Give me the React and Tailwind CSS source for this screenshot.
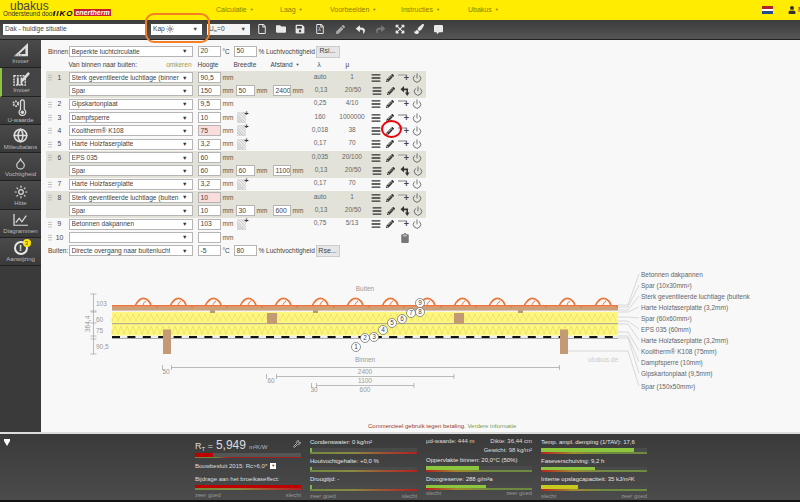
import React from 'react';
import { Globe, Droplet, Sun, Power, Wrench } from 'lucide-react';
import {
  FaRegFile, FaFolder, FaSave, FaPen, FaReply, FaShare, FaExpandArrowsAlt, FaPaintBrush, FaCommentAlt,
  FaBars, FaPencilAlt, FaClipboard, FaUser,
} from 'react-icons/fa';

const navItems = [
  ['Calculatie', 'w-[64px]', 'ml-[216px]'],
  ['Laag', 'w-[50px]', ''],
  ['Voorbeelden', 'w-[71px]', ''],
  ['Instructies', 'w-[67px]', ''],
  ['Ubakus', 'w-[50px]', ''],
];

const layers = [
  { n: 1, name: 'Sterk geventileerde luchtlage (binner', h: '90,5', l: 'auto', m: '1', shade: true },
  { name: 'Spar', h: '150', b: '50', a: '2400', l: '0,13', m: '20/50', shade: true, sub: true },
  { n: 2, name: 'Gipskartonplaat', h: '9,5', l: '0,25', m: '4/10' },
  { n: 3, name: 'Dampfsperre', h: '10', l: '160', m: '1000000', hatch: true },
  { n: 4, name: 'Kooltherm® K108', h: '75', l: '0,018', m: '38', hatch: true, warn: true },
  { n: 5, name: 'Harte Holzfaserplatte', h: '3,2', l: '0,17', m: '70', hatch: true },
  { n: 6, name: 'EPS 035', h: '60', l: '0,035', m: '20/100', shade: true },
  { name: 'Spar', h: '60', b: '60', a: '1100', l: '0,13', m: '20/50', shade: true, sub: true },
  { n: 7, name: 'Harte Holzfaserplatte', h: '3,2', l: '0,17', m: '70', hatch: true },
  { n: 8, name: 'Sterk geventileerde luchtlage (buiten', h: '10', l: 'auto', m: '1', shade: true, warn: true },
  { name: 'Spar', h: '10', b: '30', a: '600', l: '0,13', m: '20/50', shade: true, sub: true },
  { n: 9, name: 'Betonnen dakpannen', h: '103', l: '0,75', m: '5/13', hatch: true },
  { n: 10, name: '', h: '', empty: true },
];

const sideItems = [
  ['Invoer', <SetSquare key="a" />],
  ['Invoer', <InputIcon key="b" />, true],
  ['U-waarde', <ThermoIcon key="c" />],
  ['Milieubalans', <Globe key="d" size={15} strokeWidth={2.6} />],
  ['Vochtigheid', <Droplet key="e" size={13} strokeWidth={2} />],
  ['Hitte', <Sun key="f" size={14} strokeWidth={2} />],
  ['Diagrammen', <ChartIcon key="g" />],
  ['Aanwijzing', <WarnIcon key="h" />],
];

const labels = [
  ['Betonnen dakpannen', 273, 304],
  ['Spar (10x30mm²)', 284, 306],
  ['Sterk geventileerde luchtlage (buitenk', 295, 309],
  ['Harte Holzfaserplatte (3,2mm)', 306, 311],
  ['Spar (60x60mm²)', 317, 316],
  ['EPS 035 (60mm)', 328, 320],
  ['Harte Holzfaserplatte (3,2mm)', 339, 323],
  ['Kooltherm® K108 (75mm)', 350, 331],
  ['Dampfsperre (10mm)', 361, 335],
  ['Gipskartonplaat (9,5mm)', 372, 337],
  ['Spar (150x50mm²)', 385, 350],
];

const callouts = [
  [1, 356, 346], [2, 365, 337], [3, 374, 336], [4, 383, 329], [5, 392, 322],
  [6, 402, 318], [7, 411, 312], [8, 420, 311], [9, 420, 302],
];

const tiles = [143, 178, 213, 248, 283, 320, 355, 390, 427, 462, 497, 532, 567, 603];

function SetSquare() {
  return (
    <svg width="16" height="14" viewBox="0 0 18 16" fill="#ddd">
      <path d="M17 0 V15 H1 Z M14 6 L7 12.5 H14 Z" fillRule="evenodd" />
      <path d="M1 15 L5 11 M3 15 V13 M6 15 V13 M9 15 V13" stroke="#888" />
    </svg>
  );
}

function InputIcon() {
  return (
    <svg width="18" height="15" viewBox="0 0 19 16" fill="#ddd">
      <path d="M1 5 H13 V15 H1 Z" fill="none" stroke="#ddd" strokeDasharray="2 1" strokeWidth="1.6" />
      <path d="M4 7 H6 V15 H4 Z M8 7 H10 V15 H8 Z" />
      <path d="M9 9 L16 1 L18 3 L11 11 L8 12 Z" />
    </svg>
  );
}

function ThermoIcon() {
  return (
    <svg width="19" height="17" viewBox="0 0 20 18" fill="none" stroke="#ddd">
      <circle cx="5" cy="5" r="2.5" strokeWidth="2" strokeDasharray="1.5 1" />
      <path d="M10 11 V3 a2 2 0 0 1 4 0 V11 a3.5 3.5 0 1 1 -4 0 Z" strokeWidth="1.3" />
      <circle cx="12" cy="14" r="1.8" fill="#ddd" stroke="none" />
    </svg>
  );
}

function ChartIcon() {
  return (
    <svg width="16" height="14" viewBox="0 0 18 16" fill="none" stroke="#ddd" strokeWidth="1.4">
      <path d="M1 1 V14 H17" />
      <path d="M3 11 L7 6 L10 10 L15 3" />
    </svg>
  );
}

function WarnIcon() {
  return (
    <div className="relative flex h-[14px] w-[14px] items-center justify-center rounded-full border-2 border-[#e8e8e8] text-[9px] font-bold text-[#e8e8e8]">
      !
      <span className="absolute -right-[5px] -top-[4px] flex h-[8px] w-[8px] items-center justify-center rounded-full bg-[#ffe600] text-[6px] font-normal text-[#555]">3</span>
    </div>
  );
}

function HatchIcon() {
  return (
    <div className="relative h-[11px] w-[9px] bg-[repeating-linear-gradient(45deg,#cfcfcf_0,#cfcfcf_1px,#e8e8e8_1px,#e8e8e8_2px)]">
      <span className="absolute -right-[3px] -top-[2px] text-[7px] font-bold leading-none text-[#333]">+</span>
    </div>
  );
}

function AddLayerIcon() {
  return (
    <div className="relative h-[10px] w-[11px]">
      <div className="absolute left-0 top-[1px] h-[2px] w-[9px] bg-[#bbb]" />
      <span className="absolute bottom-0 right-0 text-[9px] font-bold leading-[9px] text-[#444]">+</span>
    </div>
  );
}

function TurnIcon() {
  return (
    <svg width="10" height="10" viewBox="0 0 10 10" fill="#333">
      <path d="M4 0 V2.6 H8 V7 H6.4 V4.2 H4 V6.6 L0.5 3.3 Z" />
      <path d="M4.9 6.6 H9.5 L7.2 10 Z" />
    </svg>
  );
}

function Field({ value, width = 'w-[23px]', warn }) {
  return (
    <div className={`flex h-[11px] shrink-0 items-center overflow-hidden border border-[#b5b5b5] pl-[2px] text-[6.8px] text-[#444] ${width} ${warn ? 'bg-[#fbdcdc]' : 'bg-white'}`}>
      {value}
    </div>
  );
}

function Select({ value }) {
  return (
    <div className="flex h-[11px] w-[124px] shrink-0 items-center justify-between overflow-hidden border border-[#b5b5b5] bg-white pl-[2px] pr-[4px] text-[6.6px] text-[#444]">
      <span className="overflow-hidden whitespace-nowrap">{value}</span>
      <span className="ml-[1px] shrink-0 text-[5.5px] text-[#333]">▼</span>
    </div>
  );
}

function Grip() {
  return <div className="h-[7px] w-[4px] bg-[radial-gradient(#b5b5b5_0.7px,transparent_0.8px)] bg-[length:2px_2.4px]" />;
}

function LayerRow({ row }) {
  return (
    <div className={`ml-[5px] flex h-[13.33px] w-[380px] items-center ${row.shade ? 'bg-[#e2e2d9]' : ''}`}>
      <div className="flex w-[22.5px] shrink-0 items-center pl-[2px] text-[6.8px] text-[#444]">
        {row.n && <Grip />}
        {row.n && <span className="w-[15px] text-center">{row.n}</span>}
      </div>
      <Select value={row.name} />
      <div className="ml-[5px]"><Field value={row.h} warn={row.warn} /></div>
      <span className="ml-[2px] w-[13px] shrink-0 text-[6.5px] text-[#555]">mm</span>
      {row.b && (
        <>
          <Field value={row.b} width="w-[19px]" />
          <span className="ml-[2px] w-[16px] shrink-0 text-[6.5px] text-[#555]">mm</span>
          <Field value={row.a} width="w-[18px]" />
          <span className="ml-[2px] w-[13px] shrink-0 text-[6.5px] text-[#555]">mm</span>
        </>
      )}
      {!row.b && <div className="w-[69px] shrink-0 pl-[1px]">{row.hatch && <HatchIcon />}</div>}
      <div className="flex shrink-0 items-center text-[6.5px] text-[#666]">
        <span className="-mt-[2px] w-[31px] shrink-0 text-center">{row.l}</span>
        <span className="-mt-[2px] w-[33px] shrink-0 text-center">{row.m}</span>
      </div>
      {row.empty ? (
        <div className="ml-[31px] text-[#777]"><FaClipboard size={10} /></div>
      ) : (
        <div className="flex items-center text-[#333]">
          <span className="flex w-[14px] justify-center"><FaBars size={10} /></span>
          <span className="flex w-[14px] justify-center"><FaPencilAlt size={8} /></span>
          <span className="flex w-[14px] justify-center">{row.sub ? <TurnIcon /> : <AddLayerIcon />}</span>
          <span className="flex w-[13px] justify-center"><Power size={10} strokeWidth={1.6} /></span>
        </div>
      )}
    </div>
  );
}

function ClimateRow({ label, select, temp, rh, button }) {
  return (
    <div className="ml-[7px] flex h-[13px] items-center text-[6.5px] text-[#444]">
      <span className="w-[20.5px] shrink-0">{label}</span>
      <Select value={select} />
      <div className="ml-[5px]"><Field value={temp} /></div>
      <span className="ml-[2px] w-[11px] shrink-0">°C</span>
      <Field value={rh} />
      <span className="ml-[2px] w-[57px] shrink-0 whitespace-nowrap">% Luchtvochtigheid</span>
      <div className="flex h-[12px] w-[24px] items-center justify-center border border-[#ccc] bg-[#e6e6e6] text-[7px]">{button}</div>
    </div>
  );
}

function Diagram() {
  return (
    <svg className="mt-[6px] block" width="759" height="155" viewBox="41 262 759 155" fontFamily="Liberation Sans, sans-serif">
      {/* leader lines */}
      {labels.map(([, y, from], i) => (
        <path key={i} d={`M${i === 10 ? 568 : 618} ${from} H628 L639 ${y}`} fill="none" stroke="#cfcfcf" strokeWidth="0.8" />
      ))}
      {/* insulation */}
      <rect x="112" y="311" width="506" height="11" fill="#fdf77f" />
      <rect x="112" y="323" width="506" height="11.5" fill="#fdf77f" />
      <path d={`M112 317 ${Array.from({ length: 169 }, (_, i) => `L${112 + i * 3} ${i % 2 ? 313 : 320}`).join(' ')}`} fill="none" stroke="#e0cf60" strokeWidth="0.5" />
      <path d={`M112 329 ${Array.from({ length: 169 }, (_, i) => `L${112 + i * 3} ${i % 2 ? 325 : 333}`).join(' ')}`} fill="none" stroke="#e0cf60" strokeWidth="0.5" />
      <rect x="112" y="322" width="506" height="1.2" fill="#b8ad8f" />
      <rect x="112" y="335" width="506" height="2" fill="#eee" />
      <rect x="112" y="337" width="506" height="1" fill="#aaa" />
      <path d="M112 336 H618" stroke="#111" strokeWidth="2" strokeDasharray="8 7.4" />
      {/* spars */}
      {[267, 454].map((x) => <rect key={x} x={x} y="312" width="10" height="11" fill="#c49a74" />)}
      {[163, 560].map((x) => <rect key={x} x={x} y="328.5" width="8" height="24.5" fill="#c49a74" />)}
      <rect x="112" y="309.5" width="506" height="1.5" fill="#f6f6ee" />
      {[210, 313, 416, 518].map((x) => <rect key={x} x={x} y="309" width="5" height="3" fill="#b89a78" />)}
      {/* tiles */}
      <rect x="112" y="306" width="506" height="3.6" fill="#c9a27c" />
      <rect x="112" y="304" width="506" height="1.8" fill="#e9763c" />
      {tiles.map((x) => (
        <g key={x} fill="none" stroke="#e9763c">
          <path d={`M${x - 8} 305 C${x - 5} 299 ${x - 1} 296 ${x + 3} 298 C${x + 5} 299 ${x + 7} 301 ${x + 8} 304`} strokeWidth="1.6" />
          <path d={`M${x} 305 C${x} 303 ${x + 1} 301 ${x + 3} 300`} strokeWidth="1" />
          <path d={`M${x + 14} 304 V307`} strokeWidth="1.2" />
        </g>
      ))}
      {/* dimensions */}
      <g stroke="#aaa" strokeWidth="0.8" fill="none">
        <path d="M93.5 293 V353 M90.5 293 H96.5 M90.5 310 H96.5 M90.5 311 H96.5 M90.5 322 H96.5 M90.5 335 H96.5 M90.5 338 H96.5 M90.5 353 H96.5" />
        <path d="M162.5 364 V369 M171.5 364 V369 M171.5 366.5 H559.5 M559.5 364 V369" />
        <path d="M266.5 373 V378 M276.5 373 V378 M276.5 375.5 H454 M454 373 V378" />
        <path d="M311.5 382 V387 M316.5 382 V387 M316.5 384.5 H414 M414 382 V387" />
      </g>
      <g fontSize="6.5" fill="#999">
        <text x="96" y="304.5">103</text>
        <text x="96" y="320.5">60</text>
        <text x="96" y="331.5">75</text>
        <text x="96" y="348">90,5</text>
        <text x="89.5" y="331" transform="rotate(-90 89.5 331)">364,4</text>
        <text x="166" y="372.5" textAnchor="middle">50</text>
        <text x="365" y="372.5" textAnchor="middle">2400</text>
        <text x="271" y="381.5" textAnchor="middle">60</text>
        <text x="365" y="381.5" textAnchor="middle">1100</text>
        <text x="314" y="390.5" textAnchor="middle">30</text>
        <text x="365" y="390.5" textAnchor="middle">600</text>
        <text x="365" y="290" textAnchor="middle">Buiten</text>
        <text x="365" y="360.5" textAnchor="middle">Binnen</text>
      </g>
      <text x="618" y="360.5" fontSize="6.5" fill="#ccc" textAnchor="end">ubakus.de</text>
      {callouts.map(([n, x, y]) => (
        <g key={n}>
          <circle cx={x} cy={y} r="4.5" fill="#fff" stroke="#666" strokeWidth="0.7" />
          <text x={x} y={y + 2.4} fontSize="6.5" fill="#444" textAnchor="middle">{n}</text>
        </g>
      ))}
      {labels.map(([text, y]) => (
        <text key={y} x="641" y={y + 2.5} fontSize="6.5" fill="#666">{text}</text>
      ))}
    </svg>
  );
}

function Scale({ invert }) {
  return (
    <div className={`h-[2px] w-full ${invert ? 'bg-[linear-gradient(90deg,#b52020_0%,#a08a30_30%,#6f8a40_60%,#6f8a40_100%)]' : 'bg-[linear-gradient(90deg,#6f8a40_0%,#8a8a40_40%,#a05030_70%,#b52020_100%)]'}`} />
  );
}

function Metric({ label, fillClass, width, invert }) {
  return (
    <div className="h-[18.5px]">
      <div className="h-[11px] whitespace-nowrap text-[6px] leading-[11px] text-[#e4e4e4]">{label}</div>
      <div className="h-[3.5px] w-full bg-[#4a4a4a]">
        <div className={`h-full ${fillClass}`} style={{ width }} />
      </div>
      <Scale invert={invert} />
    </div>
  );
}

function Ends({ left, right }) {
  return (
    <div className="flex justify-between text-[5.8px] leading-[9px] text-[#999]">
      <span>{left}</span>
      <span>{right}</span>
    </div>
  );
}

export default function App() {
  return (
    <div className="relative flex h-[502px] w-[800px] flex-col overflow-hidden bg-[#f8f8f8] font-['Liberation_Sans',sans-serif]">
      {/* header */}
      <header className="flex h-[20px] shrink-0 items-center bg-[#ffec00] text-[7px] text-[#8a8000]">
        <div className="relative h-[20px] w-0 shrink-0">
          <span className="absolute left-[10px] top-0 whitespace-nowrap text-[12px] leading-[12px] text-[#444]">ubakus</span>
          <span className="absolute left-[3px] top-[9.5px] whitespace-nowrap text-[6.4px] leading-[7px] text-[#333]">Ondersteund door</span>
          <span className="absolute left-[53px] top-[9.5px] whitespace-nowrap text-[8px] font-bold italic leading-[7px] tracking-[1px] text-black">IIKO</span>
          <span className="absolute left-[74px] top-[9px] h-[7px] w-[37px] whitespace-nowrap bg-[#c8202a] text-center text-[7px] font-bold italic leading-[7px] text-white">enertherm</span>
        </div>
        {navItems.map(([name, w, ml]) => (
          <div key={name} className={`${ml} flex ${w} items-center gap-[3px]`}>
            {name}<span className="text-[4px]">▼</span>
          </div>
        ))}
        <div className="ml-auto mr-[15px] flex h-[8px] w-[11px] flex-col">
          <div className="h-1/3 bg-[#b4202a]" />
          <div className="h-1/3 bg-white" />
          <div className="h-1/3 bg-[#2a4a8c]" />
        </div>
        <div className="mr-[-3px] flex w-[15px] items-center gap-[2px] overflow-hidden text-[#333]">
          <FaUser size={8} className="shrink-0" /><span className="text-[7px]">M</span>
        </div>
      </header>

      {/* toolbar */}
      <div className="flex h-[20px] shrink-0 items-center border-b border-[#222] bg-[linear-gradient(#3c3c3c,#555)] pb-[1px] text-[#e8e8e8]">
        <div className="ml-[3px] flex h-[11px] w-[143px] items-center bg-white pl-[2px] text-[6.6px] text-[#444]">Dak - huidige situatie</div>
        <div className="ml-[5px] flex h-[11px] w-[51px] items-center justify-between bg-white px-[2px] pr-[4px] text-[6.6px] text-[#444]">
          <span className="flex items-center gap-[1px]">Kap <Sun size={8} /></span>
          <span className="text-[5.5px]">▼</span>
        </div>
        <div className="ml-[5px] flex h-[11px] w-[43px] items-center justify-between bg-[#f4f4f4] px-[2px] pr-[4px] text-[6.6px] text-[#444]">
          <span>U<sub className="text-[4px]">m</sub>=0</span>
          <span className="text-[5.5px]">▼</span>
        </div>
        <div className="ml-[2.5px] flex items-center">
          <span className="flex w-[19px] justify-center"><FaRegFile size={10} /></span>
          <span className="flex w-[19px] justify-center"><FaFolder size={10} /></span>
          <span className="flex w-[19px] justify-center"><FaSave size={10} /></span>
          <span className="relative flex w-[20px] justify-center">
            <FaRegFile size={10} />
            <span className="absolute left-0 right-0 top-[2px] text-center text-[5px] leading-[7px]">λ</span>
          </span>
          <span className="flex w-[21px] justify-center text-[#aaa]"><FaPen size={9} /></span>
          <span className="flex w-[20px] justify-center"><FaReply size={9} /></span>
          <span className="flex w-[19px] justify-center text-[#777]"><FaShare size={9} /></span>
          <span className="flex w-[20px] justify-center"><FaExpandArrowsAlt size={10} /></span>
          <span className="flex w-[19px] justify-center"><FaPaintBrush size={10} /></span>
          <span className="flex w-[20px] justify-center"><FaCommentAlt size={9} /></span>
        </div>
      </div>

      <div className="flex min-h-0 flex-1">
        {/* sidebar */}
        <aside className="w-[41px] shrink-0 bg-[#3a3a3a]">
          {sideItems.map(([name, icon, active], i) => (
            <div
              key={i}
              className={`flex h-[28.3px] flex-col items-center justify-between border-b border-[#222] pb-[2px] pt-[3px] text-[6px] leading-[8px] text-[#bbb] ${active ? 'border-l-2 border-l-[#8cc63f] bg-[#444]' : 'bg-[linear-gradient(#4a4a4a,#3a3a3a)]'}`}
            >
              <div className="flex h-[16px] items-center text-[#ddd]">{icon}</div>
              <span>{name}</span>
            </div>
          ))}
        </aside>

        {/* main */}
        <main className="min-w-0 flex-1 pt-[5px]">
          <ClimateRow label="Binnen:" select="Beperkte luchtcirculatie" temp="20" rh="50" button="Rsi..." />
          <div className="flex h-[13px] items-center text-[6.5px] text-[#444]">
            <span className="ml-[27.5px] flex w-[124px] shrink-0 justify-between pr-[1px]">
              <span>Van binnen naar buiten:</span>
              <span className="text-[#8fa060]">omkeren</span>
            </span>
            <span className="ml-[5px] w-[36px] shrink-0">Hoogte</span>
            <span className="w-[37px] shrink-0">Breedte</span>
            <span className="flex w-[43px] shrink-0 items-center gap-[3px]">Afstand <span className="text-[4px]">▼</span></span>
            <span className="w-[11px] shrink-0 text-center">λ</span>
            <span className="ml-[21px]">μ</span>
          </div>
          {layers.map((row, i) => <LayerRow key={i} row={row} />)}
          <ClimateRow label="Buiten:" select="Directe overgang naar buitenlucht" temp="-5" rh="80" button="Rse..." />
          <Diagram />
          <div className="ml-[327px] mt-[3px] text-[6px] leading-[10px] text-[#a23a2a]">
            Commercieel gebruik tegen betaling. <span className="text-[#7f9a50]">Verdere informatie</span>
          </div>
        </main>
      </div>

      {/* results */}
      <footer className="relative flex h-[70px] shrink-0 border-t-[2px] border-[#ddd] bg-[linear-gradient(#3a3a3a,#4c4c4c)] pt-[3px] shadow-[inset_0_-2px_0_#111]">
        <div className="w-[195px] shrink-0 pl-[4px] pt-[2px] text-white">
          <div className="h-[2px] w-[6px] bg-white" />
          <div className="h-0 w-0 border-x-[3px] border-t-[5px] border-x-transparent border-t-white" />
        </div>

        <div className="w-[106px] shrink-0">
          <div className="-mt-[1px] flex h-[15px] items-baseline text-[#ddd]">
            <span className="text-[9px]">R<sub className="text-[6px]">T</sub> = </span>
            <span className="ml-[3px] text-[12px]">5,949</span>
            <span className="ml-[3px] text-[6px] text-[#bbb]">m²K/W</span>
            <Wrench size={8} className="ml-auto self-center text-[#ddd]" />
          </div>
          <div className="mt-[2px] h-[4px] bg-[#555]"><div className="h-full w-[18px] bg-[#c00000]" /></div>
          <div className="h-[1px] bg-[linear-gradient(90deg,#6f8a40,#6f8a40_20%,#a02020_30%,#a02020)]" />
          <div className="mt-[3px] flex h-[10px] items-center gap-[3px] text-[6px] text-[#ddd]">
            Bouwbesluit 2015: Rc&gt;6,0*
            <span className="flex h-[6px] w-[6px] items-center justify-center bg-white text-[4px] text-[#444]">▼</span>
          </div>
          <div className="mt-[3px] h-[11px] text-[6px] leading-[10px] text-[#ddd]">Bijdrage aan het broeikaseffect:</div>
          <div className="h-[3px] bg-[#c00000]" />
          <Scale />
          <div className="mt-[1px]"><Ends left="zeer goed" right="slecht" /></div>
        </div>

        <div className="ml-[9px] w-[107px] shrink-0">
          <Metric label="Condenswater: 0 kg/m²" fillClass="bg-[#7ab648]" width="2px" />
          <Metric label="Houtvochtgehalte: +0,0 %" fillClass="bg-[#7ab648]" width="2px" />
          <Metric label="Droogtijd: -" fillClass="bg-[#7ab648]" width="2px" />
          <div className="-mt-[1px]"><Ends left="zeer goed" right="slecht" /></div>
        </div>

        <div className="ml-[9px] w-[106px] shrink-0">
          <div className="flex h-[9px] justify-between whitespace-nowrap text-[6px] leading-[9px] text-[#ddd]">
            <span>μd-waarde: 444 m</span><span>Dikte: 36,44 cm</span>
          </div>
          <div className="h-[9px] text-right text-[6px] leading-[9px] text-[#ddd]">Gewicht: 98 kg/m²</div>
          <Metric label="Oppervlakte binnen: 20,0°C (50%)" fillClass="bg-[#8cc63f]" width="53px" invert />
          <Metric label="Droogreserve: 288 g/m²a" fillClass="bg-[#8cc63f]" width="60px" invert />
          <div className="-mt-[3px]"><Ends left="slecht" right="zeer goed" /></div>
        </div>

        <div className="ml-[9px] w-[106px] shrink-0">
          <Metric label="Temp. ampl. demping (1/TAV): 17,6" fillClass="bg-[#8cc63f]" width="93px" invert />
          <Metric label="Faseverschuiving: 9,2 h" fillClass="bg-[#8cc63f]" width="54px" invert />
          <Metric label="Interne opslagcapaciteit: 35 kJ/m²K" fillClass="bg-[#c8c820]" width="37px" invert />
          <div className="-mt-[1px]"><Ends left="slecht" right="zeer goed" /></div>
        </div>
      </footer>

      {/* annotations drawn over the page */}
      <div className="pointer-events-none absolute left-[145px] top-[13px] h-[30px] w-[65px] rounded-[9px] border-2 border-[#f47f24]" />
      <div className="pointer-events-none absolute left-[381px] top-[120px] h-[18px] w-[21px] rounded-[50%] border-2 border-[#e8000d]" />
    </div>
  );
}
